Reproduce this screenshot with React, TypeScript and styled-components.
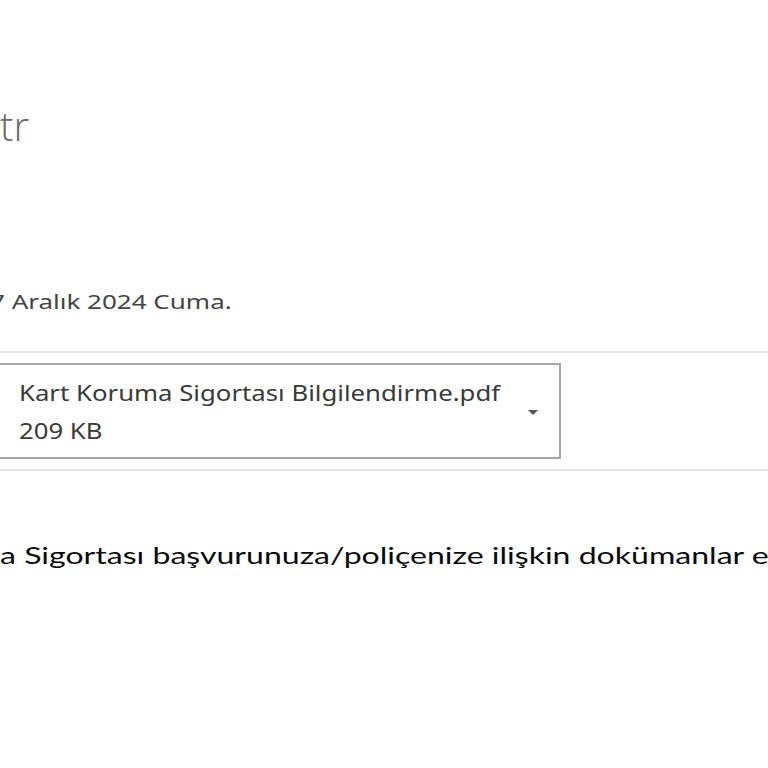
import React from "react";
import styled, { createGlobalStyle } from "styled-components";

const Global = createGlobalStyle`
  html, body { margin: 0; padding: 0; background: #ffffff; }
  body { font-family: "Noto Sans", "Open Sans", sans-serif; }
`;

const Page = styled.div`
  width: 768px;
  height: 768px;
  overflow: hidden;
  background: #fff;
  display: flex;
  flex-direction: column;
`;

const Sender = styled.div`
  font-family: "Open Sans", "Noto Sans", sans-serif;
  font-weight: 300;
  font-size: 40px;
  line-height: 48px;
  color: #6a6a6a;
  margin-top: 102px;
  white-space: nowrap;
`;

/* horizontally widened text run, to match the wide rendering of the reference */
const Stretch = styled.span<{ $k: number }>`
  display: inline-block;
  position: relative;
  white-space: nowrap;
  transform: scaleX(${(p) => p.$k});
  transform-origin: left center;
`;

/* the start of a line that lies off the left edge of the pane */
const Hidden = styled.span`
  position: absolute;
  right: 100%;
  top: 0;
  white-space: nowrap;
`;

const InfoText = styled.div`
  font-family: "Noto Sans", sans-serif;
  font-size: 20px;
  line-height: 28px;
  color: #444;
  margin-top: 138px;
  margin-left: -10px;
  white-space: nowrap;
`;

const Divider = styled.div`
  height: 2px;
  background: #e4e4e4;
  width: 100%;
`;

const AttachBar = styled.div`
  margin-top: 35px;
  display: flex;
  flex-direction: column;
`;

const AttachArea = styled.div`
  padding: 10px 0;
  display: flex;
`;

const AttachCard = styled.div`
  margin-left: -40px;
  width: 601px;
  height: 96px;
  box-sizing: border-box;
  border: 2px solid #a6a6a6;
  display: flex;
  align-items: center;
  padding-left: 57px;
  padding-right: 21px;
`;

const FileInfo = styled.div`
  display: flex;
  flex-direction: column;
  font-family: "Noto Sans", sans-serif;
  font-size: 22px;
  line-height: 38px;
  color: #3a3a3a;
  flex: 1;
`;

const Caret = styled.div`
  width: 0;
  height: 0;
  border-left: 5px solid transparent;
  border-right: 5px solid transparent;
  border-top: 5px solid #555;
  margin-top: 2px;
`;

const Body = styled.div`
  font-family: "Lato", "Open Sans", sans-serif;
  font-size: 24px;
  line-height: 32px;
  color: #0a0a0a;
  margin-top: 68px;
  white-space: nowrap;
`;

export default function App() {
  return (
    <Page>
      <Global />
      <Sender>tr</Sender>
      <InfoText>
        <Stretch $k={1.3}>
          <Hidden>2</Hidden>7 Aralık 2024 Cuma.
        </Stretch>
      </InfoText>
      <AttachBar>
        <Divider />
        <AttachArea>
          <AttachCard>
            <FileInfo>
              <Stretch $k={1.17}>Kart Koruma Sigortası Bilgilendirme.pdf</Stretch>
              <Stretch $k={1.17}>209 KB</Stretch>
            </FileInfo>
            <Caret />
          </AttachCard>
        </AttachArea>
        <Divider />
      </AttachBar>
      <Body>
        <Stretch $k={1.335}>
          <Hidden>Kart Korum</Hidden>a Sigortası başvurunuza/poliçenize ilişkin dokümanlar ekte yer almaktadır.
        </Stretch>
      </Body>
    </Page>
  );
}
